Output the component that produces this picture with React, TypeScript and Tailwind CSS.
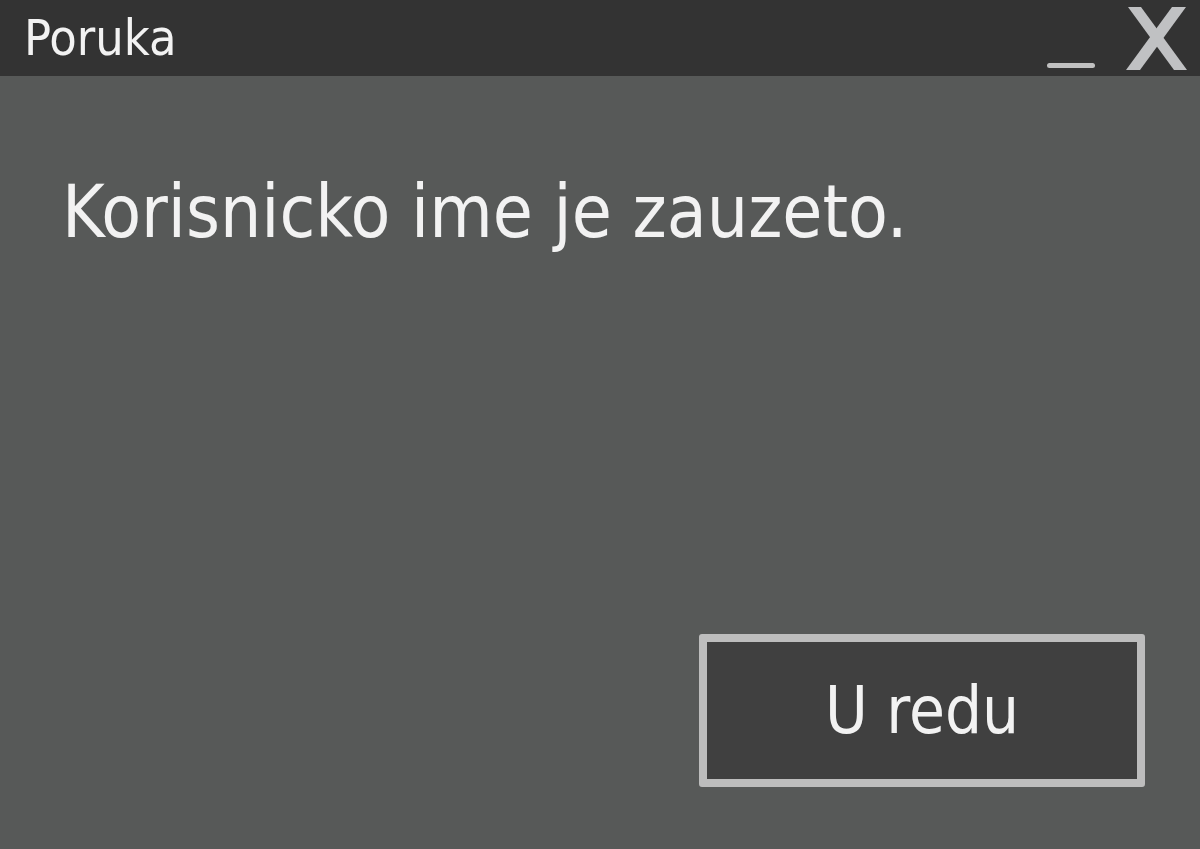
export default function App() {
  const font = { fontFamily: '"DejaVu Sans Condensed", "DejaVu Sans", sans-serif' };
  return (
    <div className="w-[1200px] h-[849px] flex flex-col bg-[#575958] overflow-hidden" style={font}>
      <div className="h-[76px] bg-[#333333] flex items-center justify-between pl-[24px] pr-[12px]">
        <span className="text-[50px] leading-none text-[#f2f2f2]">Poruka</span>
        <div className="flex items-end gap-[30px] h-full">
          <div className="w-[48px] h-[5px] rounded-full bg-[#c0c0c0] mb-[8px]" />
          <svg width="63" height="63" viewBox="0 0 63 63" className="mb-[6px]">
            <polygon points="3,0 16,0 62,63 49,63" fill="#c0c1c3" />
            <polygon points="47,0 61,0 15,63 1,63" fill="#c0c1c3" />
          </svg>
        </div>
      </div>
      <div className="flex-1 flex flex-col px-[62px] pt-[100px] pb-[62px]">
        <p className="text-[72.5px] leading-none text-[#f2f2f2]">Korisnicko ime je zauzeto.</p>
        <div className="flex-1" />
        <div className="flex justify-end mr-[-7px]">
          <button className="w-[446px] h-[153px] bg-[#404040] border-[8px] border-[#bdbdbd] rounded-[3px] text-[65px] text-[#f2f2f2] leading-none">
            U redu
          </button>
        </div>
      </div>
    </div>
  );
}
